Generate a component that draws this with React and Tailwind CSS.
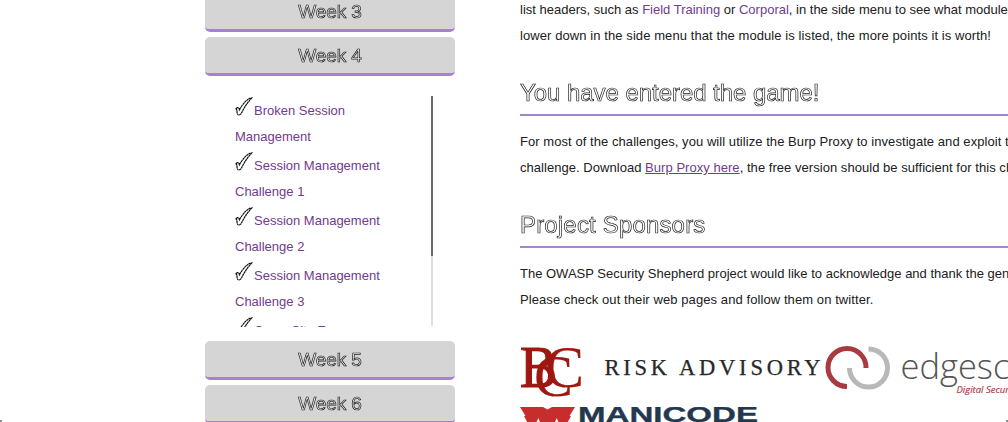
const sans = 'font-["Liberation_Sans",Arial,sans-serif]';

function Check() {
  return (
    <svg className="relative -top-[3px] mr-px inline-block h-[19px] w-[18px] align-[-4px]" viewBox="0 0 18 19" aria-hidden="true">
      <path
        d="M1 11.6C2.6 10 4 10.2 4.4 12.8C7 8.2 10.4 3.4 14.6 1.4L16.6 1.1C12.3 5.6 9 11 6.3 16.4C4.9 18.4 2.9 18.6 2.2 16.6C2 14.5 2 12.8 1 11.6Z"
        fill="white"
        stroke="#111"
        strokeWidth="1.2"
        strokeDasharray="2.4 .35"
      />
    </svg>
  );
}

function WeekButton({ children }) {
  return (
    <button className="block h-[39px] w-[250px] shrink-0 overflow-hidden rounded-[5px] border-b-3 border-[#a482cf] bg-[#d5d5d5] text-center">
      <span className="flex h-[36px] items-center justify-center text-[19px] leading-[36px] tracking-[-0.1px] text-[#e6e6e6] will-change-transform [-webkit-text-stroke:0.7px_#222]">
        <span className="pt-px">{children}</span>
      </span>
    </button>
  );
}

function Heading({ children }) {
  return (
    <h2 className="mt-[22px] h-[45px] border-b-2 border-[#a288ca] pt-[6px] text-[24px] leading-[32px] tracking-[-0.05px] whitespace-nowrap text-white will-change-transform [-webkit-text-stroke:0.7px_#222]">
      {children}
    </h2>
  );
}

const lessons = [
  ['Broken Session', 'Management'],
  ['Session Management', 'Challenge 1'],
  ['Session Management', 'Challenge 2'],
  ['Session Management', 'Challenge 3'],
  ['Cross Site Forgery', 'Challenge 1'],
];

function Sponsors() {
  return (
    <div className="mt-[31px] w-[620px]">
      <div className="flex h-[56px]">
        <svg className="h-[56px] w-[304px] shrink-0" viewBox="0 0 304 56">
          <g fill="#9e1710" stroke="#9e1710" fontFamily="Liberation Serif, serif" fontSize="60">
            <text x="0" y="43" strokeWidth="1.2" textLength="37" lengthAdjust="spacingAndGlyphs">B</text>
            <text x="25" y="42.5" strokeWidth=".2" textLength="39" lengthAdjust="spacingAndGlyphs">C</text>
            <text x="14" y="52" strokeWidth=".2" textLength="39" lengthAdjust="spacingAndGlyphs">C</text>
          </g>
          <text x="84.5" y="31" fill="#282828" stroke="#282828" strokeWidth=".25" fontFamily="Liberation Serif, serif" fontSize="22.5" textLength="216">RISK ADVISORY</text>
        </svg>
        <svg className="h-[56px] w-[260px] shrink-0" viewBox="0 0 260 56">
          <path d="M23 42.5A19 19 0 1 1 42 24" fill="none" stroke="#a93b40" strokeWidth="5" />
          <path d="M44.5 5A19 19 0 1 1 25.5 24" fill="none" stroke="#b8b8b8" strokeWidth="5" />
          <text x="76.5" y="35" fill="#555" fontFamily="Open Sans, sans-serif" fontWeight="300" fontSize="34.5">edgescan</text>
          <text x="132.5" y="49" fill="#aa464d" stroke="#aa464d" strokeWidth=".2" fontFamily="Open Sans, sans-serif" fontStyle="italic" fontSize="9.5">Digital Security</text>
        </svg>
      </div>
      <svg className="mt-[7px] h-[28px] w-[240px]" viewBox="0 0 240 28">
        <path d="M0 0H23L27.5 2.5L32 0H55L49.5 9H51L43 24L36.5 11L32 24H23L18.5 11L12 24L4 9H5.5Z" fill="#c82d2e" />
        <text x="58" y="15.3" fill="#22384f" stroke="#22384f" strokeWidth=".3" fontFamily="Liberation Sans, Arial, sans-serif" fontWeight="700" fontSize="21.5" textLength="180" lengthAdjust="spacingAndGlyphs">MANICODE</text>
      </svg>
    </div>
  );
}

export default function App() {
  return (
    <div className={`${sans} relative flex h-[422px] w-[1008px] overflow-hidden bg-white text-[13px] leading-[26px] text-[#202020]`}>
      <aside className="ml-[205px] flex w-[250px] shrink-0 flex-col gap-[5px]">
        <div className="-mt-[7px]"><WeekButton>Week 3</WeekButton></div>
        <WeekButton>Week 4</WeekButton>
        <div className="mt-[15px] mb-[9px] ml-[30px] flex h-[231px] w-[198px] shrink-0 overflow-hidden">
          <ul className="flex-1 pt-px text-[#713b8e]">
            {lessons.map(([first, second], i) => (
              <li key={i} className="h-[55px] whitespace-nowrap">
                <a className="block h-[27px] leading-[28px]"><Check />{first}</a>
                <a className="block h-[28px] leading-[26px]">{second}</a>
              </li>
            ))}
          </ul>
          <div className="h-[230px] w-[2px] bg-[#dedede]">
            <div className="h-[160px] bg-[#686868]" />
          </div>
        </div>
        <WeekButton>Week 5</WeekButton>
        <WeekButton>Week 6</WeekButton>
      </aside>
      <main className="-mt-[3px] ml-[65px] w-[620px] shrink-0">
        <p className="whitespace-nowrap">
          list headers, such as <a className="text-[#713b8e]">Field Training</a> or <a className="text-[#713b8e]">Corporal</a>, in the side menu to see what modules<br />
          <span className="tracking-[0.085px]">lower down in the side menu that the module is listed, the more points it is worth!</span>
        </p>
        <Heading>You have entered the game!</Heading>
        <p className="mt-[13px] whitespace-nowrap">
          <span className="tracking-[0.06px]">For most of the challenges, you will utilize the Burp Proxy to investigate and exploit the</span><br />
          <span className="tracking-[0.04px]">challenge. Download <a className="text-[#713b8e] underline">Burp Proxy here</a>, the free version should be sufficient for this challenge.</span>
        </p>
        <Heading><span className="tracking-[0.17px]">Project Sponsors</span></Heading>
        <p className="mt-[13px] whitespace-nowrap">
          The OWASP Security Shepherd project would like to acknowledge and thank the generous<br />
          <span className="tracking-[0.085px]">Please check out their web pages and follow them on twitter.</span>
        </p>
        <Sponsors />
      </main>
      <div className="absolute bottom-0 left-0 size-[2px] rounded-tr-[1px] bg-[#888]" />
      <div className="absolute right-0 bottom-0 size-[2px] rounded-tl-[1px] bg-[#888]" />
    </div>
  );
}
